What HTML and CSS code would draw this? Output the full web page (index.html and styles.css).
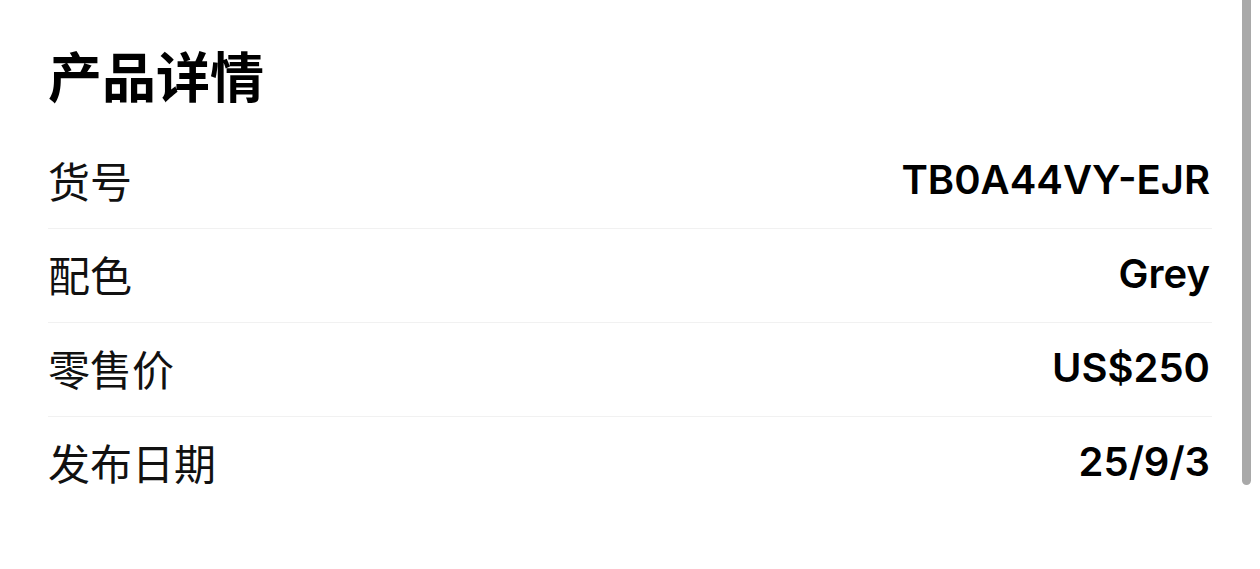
FILE: index.html
```html
<!DOCTYPE html>
<html lang="zh-CN">
<head>
<meta charset="utf-8">
<title>产品详情</title>
<link rel="stylesheet" href="styles.css">
</head>
<body>
<main class="details">
  <h1 class="details-title">产品详情</h1>
  <dl class="details-list">
    <div class="details-row">
      <dt class="details-label">货号</dt>
      <dd class="details-value">TB0A44VY-EJR</dd>
    </div>
    <div class="details-row">
      <dt class="details-label">配色</dt>
      <dd class="details-value">Grey</dd>
    </div>
    <div class="details-row">
      <dt class="details-label">零售价</dt>
      <dd class="details-value">US$250</dd>
    </div>
    <div class="details-row details-row-last">
      <dt class="details-label">发布日期</dt>
      <dd class="details-value">25/9/3</dd>
    </div>
  </dl>
</main>
<div class="scroll-indicator"></div>
</body>
</html>
```
FILE: styles.css
```css
html, body {
  margin: 0;
  padding: 0;
  background: #ffffff;
  height: 100%;
  overflow: hidden;
}

body {
  font-family: "Inter", "Noto Sans CJK SC", sans-serif;
  color: #000;
  position: relative;
}

.details {
  padding: 48px 48px 0 48px;
}

.details-title {
  margin: 0;
  font-family: "Noto Sans CJK SC", sans-serif;
  font-size: 54px;
  line-height: 54px;
  font-weight: 700;
  color: #000;
}

.details-list {
  margin: 33px 0 0;
  padding: 0;
}

.details-row {
  display: flex;
  justify-content: space-between;
  align-items: center;
  padding: 24px 0 27px;
  border-bottom: 1px solid #f1f1f1;
}

.details-row-last {
  border-bottom: none;
}

.details-label {
  margin: 0;
  font-family: "Noto Sans CJK SC", sans-serif;
  font-size: 42px;
  line-height: 42px;
  font-weight: 400;
  color: #111;
}

.details-value {
  margin: 0;
  font-family: "Inter", "Noto Sans CJK SC", sans-serif;
  font-size: 40px;
  line-height: 42px;
  font-weight: 600;
  color: #000;
  padding-right: 2px;
}

.scroll-indicator {
  position: absolute;
  top: -10px;
  left: 1242px;
  width: 9px;
  height: 495px;
  background: #a9a9a9;
  border-radius: 5px;
}
```
